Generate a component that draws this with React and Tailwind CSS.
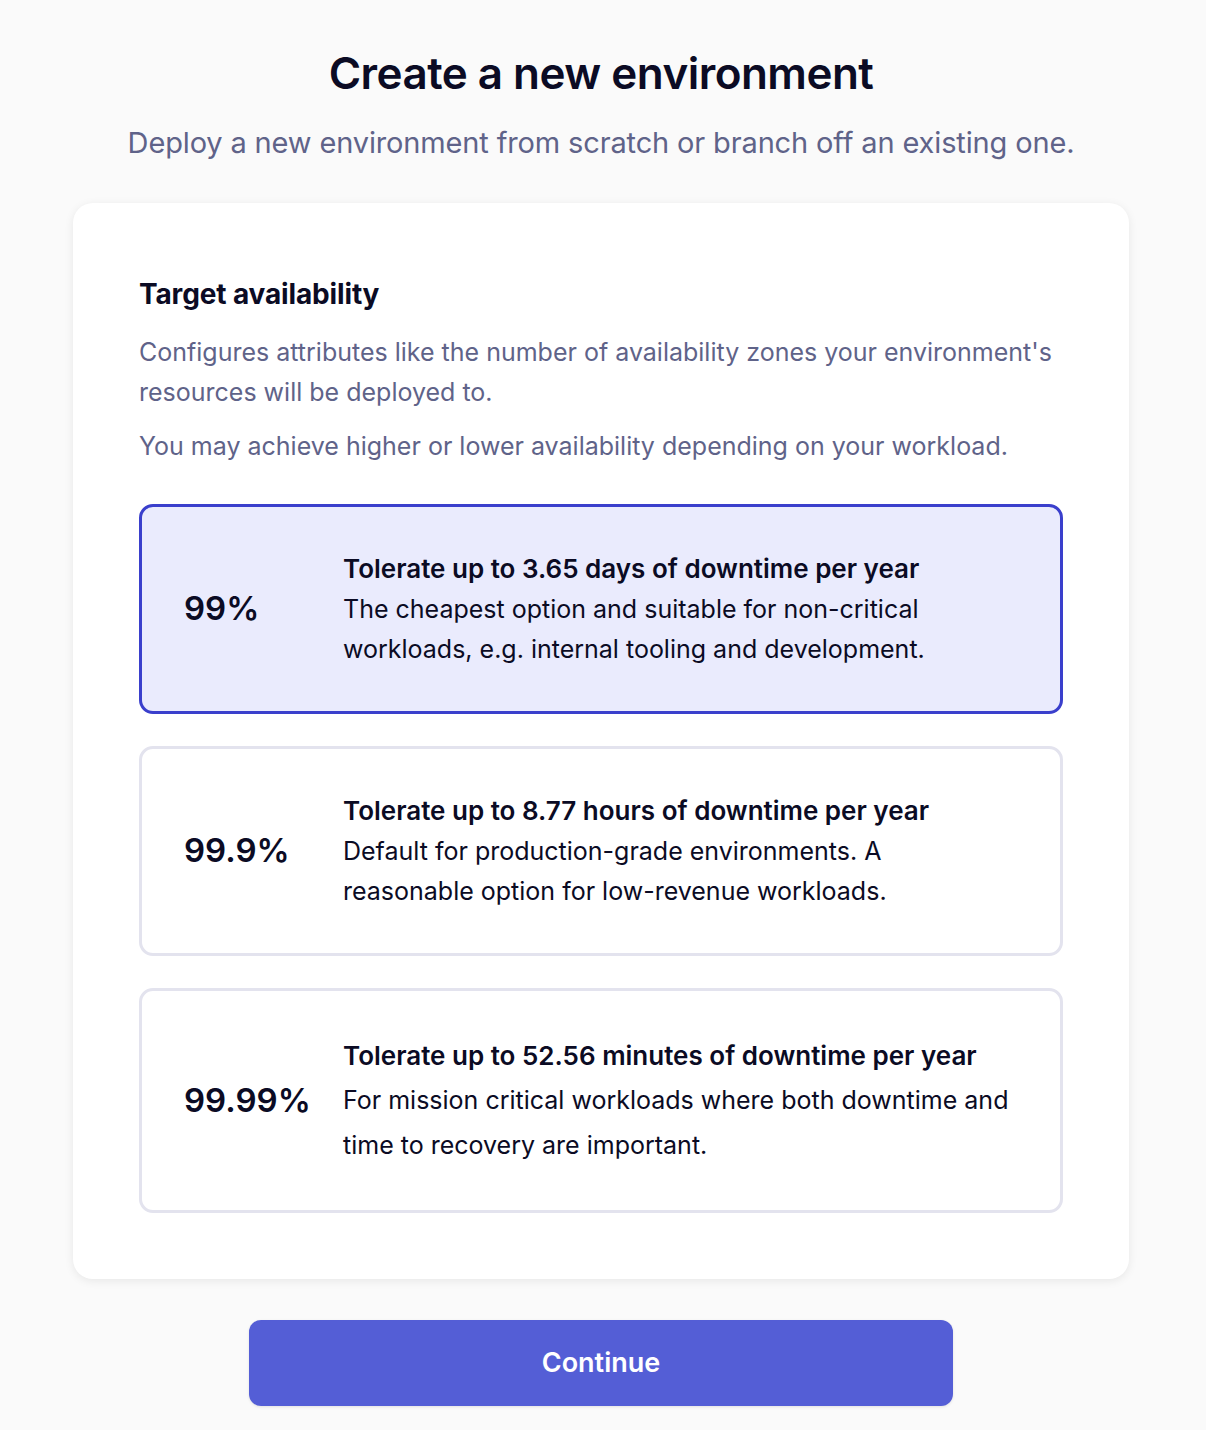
import React, { useState } from 'react';

const options = [
  {
    pct: "99%",
    title: "Tolerate up to 3.65 days of downtime per year",
    desc: "The cheapest option and suitable for non-critical workloads, e.g. internal tooling and development.",
    leading: "leading-[40px]",
  },
  {
    pct: "99.9%",
    title: "Tolerate up to 8.77 hours of downtime per year",
    desc: "Default for production-grade environments. A reasonable option for low-revenue workloads.",
    leading: "leading-[40px]",
  },
  {
    pct: "99.99%",
    title: "Tolerate up to 52.56 minutes of downtime per year",
    desc: "For mission critical workloads where both downtime and time to recovery are important.",
    leading: "leading-[45px]",
  },
];

function App() {
  const [selected, setSelected] = useState(0);

  return (
    <div className="min-h-screen bg-[#fafafa] font-['Inter',sans-serif]">
      <div className="w-[1202px] pt-[47px] pb-[25px]">
        {/* Header */}
        <h1 className="text-center text-[44px] leading-[52px] font-semibold tracking-[-0.012em] text-[#0b0b24]">
          Create a new environment
        </h1>
        <p className="mt-[24px] text-center text-[29px] leading-[40px] text-[#5f6389] tracking-[-0.005em]">
          Deploy a new environment from scratch or branch off an existing one.
        </p>

        {/* Card */}
        <div className="mx-auto mt-[40px] w-[1056px] rounded-[20px] bg-white px-[66px] pt-[71px] pb-[66px] shadow-[0_2px_10px_rgba(0,0,0,0.08)]">
          <h2 className="text-[28px] leading-[40px] font-bold tracking-[-0.005em] text-[#0b0b24]">Target availability</h2>
          <p className="mt-[18px] text-[25px] leading-[40px] text-[#5f6389]">
            Configures attributes like the number of availability zones your environment's resources will be deployed to.
          </p>
          <p className="mt-[14px] text-[25px] leading-[40px] text-[#5f6389]">
            You may achieve higher or lower availability depending on your workload.
          </p>

          <div className="mt-[38px] flex flex-col gap-[32px]">
            {options.map((o, i) => (
              <div
                key={o.pct}
                onClick={() => setSelected(i)}
                className={`flex items-center rounded-[14px] border-[3px] py-[42px] pl-[42px] pr-[20px] cursor-pointer ${
                  selected === i ? "border-[#3a3fcc] bg-[#eaebfd]" : "border-[#e3e3ee] bg-white"
                }`}
              >
                <div className="w-[159px] shrink-0 text-[33px] font-semibold text-[#0b0b24]">{o.pct}</div>
                <div className={`max-w-[672px] text-[25px] text-[#0b0b24] ${o.leading}`}>
                  <div className="text-[26px] font-semibold">{o.title}</div>
                  <div>{o.desc}</div>
                </div>
              </div>
            ))}
          </div>
        </div>

        <div className="mt-[41px] flex justify-center">
          <button className="h-[86px] w-[704px] rounded-[12px] bg-[#545ed6] text-[27px] font-semibold text-white shadow-[0_1px_3px_rgba(0,0,0,0.1)]">
            Continue
          </button>
        </div>
      </div>
    </div>
  );
}

export default App;
